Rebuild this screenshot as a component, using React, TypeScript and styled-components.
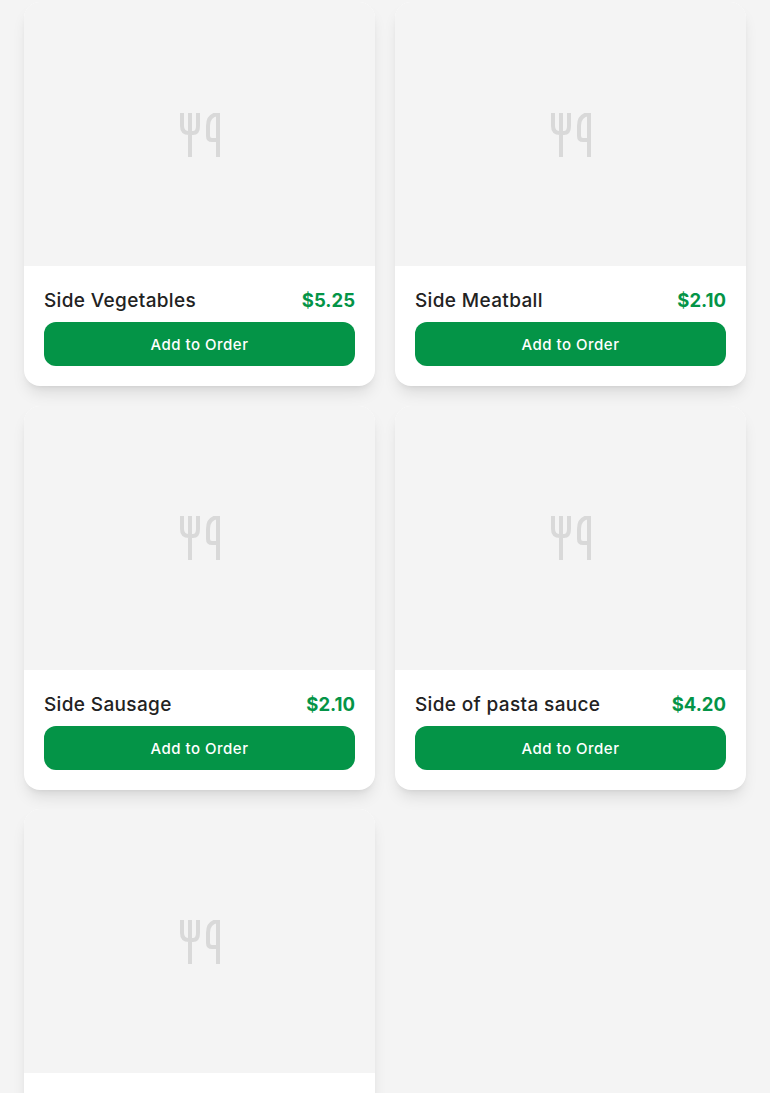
import styled, { createGlobalStyle } from "styled-components";

interface Item {
  name?: string;
  price?: string;
}

// last card's text sits below the fold
const items: Item[] = [
  { name: "Side Vegetables", price: "$5.25" },
  { name: "Side Meatball", price: "$2.10" },
  { name: "Side Sausage", price: "$2.10" },
  { name: "Side of pasta sauce", price: "$4.20" },
  {},
];

const GlobalStyle = createGlobalStyle`
  html, body {
    margin: 0;
    height: 1093px;
    overflow: hidden;
    background-color: #f4f4f4;
    font-family: "Inter", "Liberation Sans", sans-serif;
  }
`;

const Grid = styled.div`
  display: grid;
  grid-template-columns: 351px 351px;
  column-gap: 20px;
  row-gap: 19.600px;
  padding: 2px 24px 0;
`;

const Card = styled.div`
  display: flex;
  flex-direction: column;
  height: 384px;
  border-radius: 16px;
  overflow: hidden;
  background-color: #ffffff;
  box-shadow: 0 10px 15px -3px rgba(0, 0, 0, 0.1), 0 4px 6px -4px rgba(0, 0, 0, 0.1);
`;

const ImagePlaceholder = styled.div`
  display: flex;
  flex-shrink: 0;
  align-items: flex-start;
  justify-content: center;
  height: 153.300px;
  padding-top: 110.800px;
  background-color: #f4f4f4;
`;

const CardBody = styled.div`
  display: flex;
  flex-direction: column;
  gap: 8px;
  padding: 20px;
`;

const TitleRow = styled.div`
  display: flex;
  box-sizing: border-box;
  align-items: center;
  justify-content: space-between;
  height: 28px;
  padding-top: 0.800px;
`;

const Name = styled.span`
  font-size: 19px;
  font-weight: 500;
  letter-spacing: 0.35px;
  color: #222222;
`;

const Price = styled.span`
  font-size: 18.500px;
  font-weight: 700;
  color: #049447;
`;

const AddButton = styled.button`
  height: 44px;
  border: none;
  border-radius: 12px;
  padding: 0.800px 0 0;
  background-color: #049447;
  color: #ffffff;
  font-family: inherit;
  font-size: 15px;
  font-weight: 500;
  letter-spacing: 0.5px;
`;

function ForkKnife() {
  return (
    <svg width="42" height="44" viewBox="0 0 42 44" fill="none" stroke="#d9d9d9" strokeWidth="4">
      <path d="M3 0v13q0 7 7 7h4q5 0 5-7V0M11 0v44" />
      <path d="M39 0v44M39 1q-10 1-10 12v10q0 4 4 4h6" />
    </svg>
  );
}

export default function App() {
  return (
    <>
      <GlobalStyle />
      <Grid>
        {items.map((item, i) => (
          <Card key={i}>
            <ImagePlaceholder>
              <ForkKnife />
            </ImagePlaceholder>
            {item.name && (
              <CardBody>
                <TitleRow>
                  <Name>{item.name}</Name>
                  <Price>{item.price}</Price>
                </TitleRow>
                <AddButton>Add to Order</AddButton>
              </CardBody>
            )}
          </Card>
        ))}
      </Grid>
    </>
  );
}
